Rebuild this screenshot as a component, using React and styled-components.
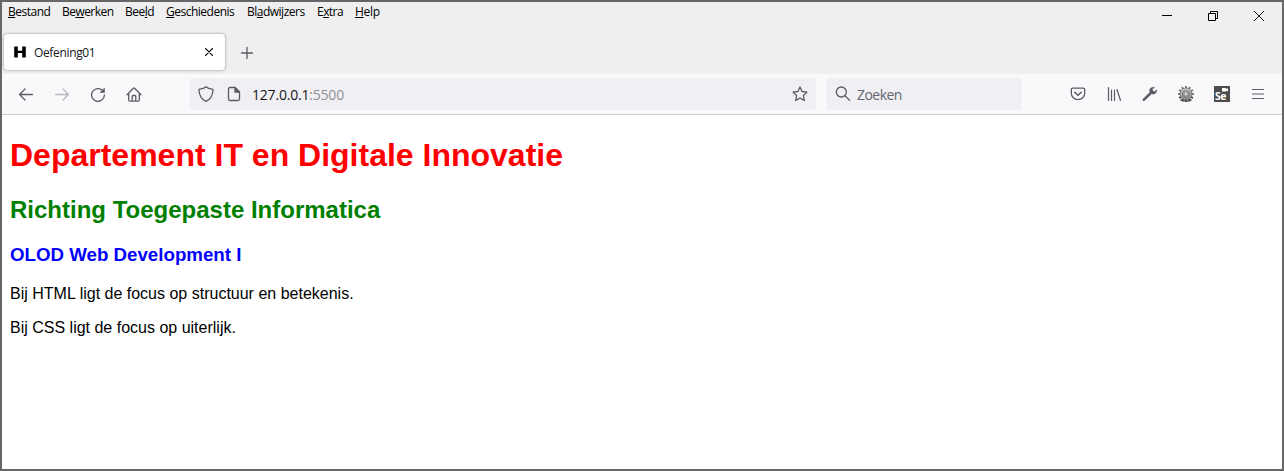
import React from 'react';
import styled, { createGlobalStyle } from 'styled-components';

const GlobalStyle = createGlobalStyle`
  * { box-sizing: border-box; }
  html, body { margin: 0; padding: 0; background: #fff; }
  body { overflow: hidden; }
`;

const Window = styled.div`
  width: 1284px;
  height: 471px;
  border: 2px solid #666;
  background: #fff;
  display: flex;
  flex-direction: column;
  overflow: hidden;
  font-family: 'Open Sans', 'Noto Sans', sans-serif;
`;

const TitleBar = styled.header`
  height: 30px;
  flex: none;
  background: #efefef;
  display: flex;
  justify-content: space-between;
`;

const MenuBar = styled.nav`
  display: flex;
  padding-left: 6px;
  height: 20px;
`;

const MenuItem = styled.span`
  width: ${(p) => p.$width}px;
  font-size: 12px;
  line-height: 20px;
  letter-spacing: ${(p) => p.$spacing}px;
  color: #000;
  white-space: nowrap;
  u { text-underline-offset: 1px; text-decoration-thickness: 1px; }
`;

const WindowControls = styled.div`
  display: flex;
  align-items: center;
  height: 28px;
`;

const Control = styled.div`
  width: 46px;
  display: flex;
  justify-content: center;
`;

const TabStrip = styled.div`
  height: 42px;
  flex: none;
  background: #efefef;
  display: flex;
  align-items: flex-start;
  padding: 2px 0 0 2px;
`;

const Tab = styled.div`
  width: 221px;
  height: 36px;
  border-radius: 4px;
  background: #fff;
  box-shadow: 0 0 3px rgba(60, 60, 75, 0.55);
  display: flex;
  align-items: center;
  padding: 0 8px;
`;

const TabTitle = styled.span`
  flex: 1;
  margin-left: 6px;
  font-size: 12px;
  line-height: 16px;
  letter-spacing: -0.35px;
  padding-top: 1px;
  color: #15141a;
`;

const NewTab = styled.div`
  width: 43px;
  height: 37px;
  display: flex;
  align-items: center;
  justify-content: center;
`;

const Toolbar = styled.div`
  height: 41px;
  flex: none;
  background: #f9f9fb;
  border-bottom: 1px solid #ccc;
  display: flex;
  align-items: center;
  color: #5b5b66;
`;

const ButtonGroup = styled.div`
  display: flex;
  gap: 20px;
  padding-left: 16px;
  width: 188px;
`;

const Extensions = styled.div`
  display: flex;
  gap: 20px;
  margin-left: auto;
  padding-right: 16px;
`;

const Field = styled.div`
  width: ${(p) => p.$width}px;
  height: 32px;
  border-radius: 4px;
  background: #f0f0f4;
  display: flex;
  align-items: center;
  padding: 0 8px;
`;

const AddressField = styled(Field)`
  gap: 12px;
  margin-right: 10px;
`;

const SearchField = styled(Field)`
  gap: 6px;
  padding-left: 9px;
`;

const Address = styled.span`
  flex: 1;
  margin-left: -2px;
  font-size: 14px;
  line-height: 20px;
  letter-spacing: -0.2px;
  padding-top: 2px;
  color: #15141a;
  span { color: #8f8f96; }
`;

const Placeholder = styled.span`
  font-size: 14px;
  line-height: 20px;
  letter-spacing: -0.55px;
  padding-top: 2px;
  color: #66656f;
`;

const Glyph = styled.svg`
  display: block;
  flex: none;
  opacity: ${(p) => (p.$dim ? 0.4 : 1)};
`;

const Page = styled.main`
  flex: 1;
  padding: 0 8px;
  display: flow-root;
  font-family: Arial, 'Liberation Sans', sans-serif;
  font-size: 16px;
  color: #000;
`;

const Department = styled.h1`
  margin: 21px 0 22px;
  font-size: 32px;
  line-height: 38px;
  color: red;
`;

const Course = styled.h2`
  margin: 22px 0 21px;
  font-size: 24px;
  line-height: 27px;
  color: green;
`;

const Module = styled.h3`
  margin: 0 0 19px;
  font-size: 18.72px;
  line-height: 22px;
  color: blue;
`;

const Paragraph = styled.p`
  margin: 0 0 16px;
  line-height: 18px;
`;

function Icon({ children, size = 16, dim, ...rest }) {
  return (
    <Glyph width={size} height={size} viewBox={`0 0 ${size} ${size}`} fill="none" stroke="#5b5b66"
      strokeWidth="1.3" strokeLinecap="round" strokeLinejoin="round" $dim={dim} {...rest}>
      {children}
    </Glyph>
  );
}

const menu = [
  ['', 'B', 'estand', 54, -0.5],
  ['Be', 'w', 'erken', 63, -0.55],
  ['Bee', 'l', 'd', 41, -0.5],
  ['', 'G', 'eschiedenis', 81, -0.5],
  ['Bl', 'a', 'dwijzers', 70, -0.5],
  ['E', 'x', 'tra', 38, -0.55],
  ['', 'H', 'elp', 40, -0.3],
];

const teeth = Array.from({ length: 12 }, (_, i) => i * 30);

export default function App() {
  return (
    <>
      <GlobalStyle />
      <Window>
        <TitleBar>
          <MenuBar>
            {menu.map(([before, key, after, width, spacing]) => (
              <MenuItem key={before + key} $width={width} $spacing={spacing}>
                {before}<u>{key}</u>{after}
              </MenuItem>
            ))}
          </MenuBar>
          <WindowControls>
            <Control>
              <Icon size={12} stroke="#000" strokeWidth="1" strokeLinecap="butt"><path d="M1 5.5h10" /></Icon>
            </Control>
            <Control>
              <Icon size={12} stroke="#000" strokeWidth="1" strokeLinejoin="miter" strokeLinecap="butt">
                <path d="M1.5 3.5h7v7h-7zM3.5 3.5v-2h7v7h-2" />
              </Icon>
            </Control>
            <Control>
              <Icon size={12} stroke="#000" strokeWidth="0.9" strokeLinecap="butt"><path d="M1 1l10 10M11 1L1 11" /></Icon>
            </Control>
          </WindowControls>
        </TitleBar>

        <TabStrip>
          <Tab>
            <Icon stroke="none">
              <path fill="#000" d="M2.200 2.500h3.600v4.200h4.400V2.500h3.600v11h-3.600V9H5.800v4.500H2.200z" />
            </Icon>
            <TabTitle>Oefening01</TabTitle>
            <Icon stroke="#15141a" strokeWidth="1.100"><path d="M4.500 4.500l7 7M11.500 4.500l-7 7" /></Icon>
          </Tab>
          <NewTab>
            <Icon strokeWidth="1.300"><path d="M8 2.500v11M2.500 8h11" /></Icon>
          </NewTab>
        </TabStrip>

        <Toolbar>
          <ButtonGroup>
            <Icon><path d="M14.500 8.500h-13M7 3L1.500 8.500 7 14" /></Icon>
            <Icon dim><path d="M1.500 8.500h13M9 3l5.500 5.500L9 14" /></Icon>
            <Icon>
              <path d="M12.800 4.700A6.400 6.400 0 1 0 14.400 9" />
              <path d="M14.500 2.300v4.200H10.300z" fill="#5b5b66" strokeWidth="0.600" />
            </Icon>
            <Icon>
              <path d="M1 8.700L7.400 2.300q.6-.6 1.200 0L15 8.700M2.700 7.500v6.300q0 1.300 1.300 1.300h8q1.300 0 1.300-1.300V7.500M6.200 15.100v-4.600q0-1 1-1h1.600q1 0 1 1v4.600" />
            </Icon>
          </ButtonGroup>

          <AddressField $width={626}>
            <Icon>
              <path d="M8 .8C6.500 2.200 4 3 1.700 3.200 1 3.300.9 3.800 1 4.500c.4 5 2.500 9 7 10.800 4.500-1.800 6.600-5.800 7-10.800.1-.7 0-1.200-.7-1.300C12 3 9.500 2.200 8 .8z" />
            </Icon>
            <Icon>
              <path d="M9 1.500H4q-1.500 0-1.500 1.500v10q0 1.500 1.500 1.500h8q1.500 0 1.500-1.500V6z" />
              <path d="M9 1.500V6h4.500z" fill="#5b5b66" />
            </Icon>
            <Address>127.0.0.1<span>:5500</span></Address>
            <Icon>
              <path d="M8 1l2.100 4.500 4.900.6-3.600 3.400.9 5L8 12.100l-4.300 2.400.9-5L1 6.100l4.900-.6z" />
            </Icon>
          </AddressField>

          <SearchField $width={196}>
            <Icon><circle cx="6.300" cy="6" r="5" /><path d="M10 9.700l4.700 4.700" /></Icon>
            <Placeholder>Zoeken</Placeholder>
          </SearchField>

          <Extensions>
            <Icon>
              <path d="M2.800 2.200h10.400q1.500 0 1.500 1.500v3.600a6.700 6.300 0 0 1-13.400 0V3.700q0-1.500 1.500-1.500z" />
              <path d="M4.700 6.200L8 9.200l3.300-3" strokeWidth="1.500" />
            </Icon>
            <Icon strokeWidth="1.200"><path d="M2.500 1.500v13M5.500 4v10.500M8.500 4v10.500M11 3.500l3.500 11" /></Icon>
            <Icon stroke="none">
              <path fill="#5b5b66" d="M14.800 3.200l-2.500 2.500-2-2L12.800 1.200C10.800.6 8.500 1.500 7.700 3.200c-.5 1-.4 2 0 3L1.100 12.800c-.6.6-.6 1.400-.1 1.900s1.300.5 1.900-.1l6.700-6.500c2.400 1.100 5.900-.8 5.200-4.900z" />
            </Icon>
            <Icon stroke="none">
              <defs>
                <linearGradient id="metal" x1="0" y1="0" x2="0" y2="1">
                  <stop stopColor="#d0d0d0" /><stop offset="1" stopColor="#858585" />
                </linearGradient>
              </defs>
              <ellipse cx="8" cy="14" rx="6" ry="1.800" fill="#777" />
              {teeth.map((angle) => (
                <rect key={angle} x="7" y="0" width="2" height="3" rx=".5" fill={angle > 90 && angle < 270 ? '#444' : '#777'} transform={`rotate(${angle} 8 8)`} />
              ))}
              <circle cx="8" cy="8" r="6" fill="url(#metal)" stroke="#6d6d6d" strokeWidth=".7" />
              <circle cx="8" cy="8" r="3.500" stroke="#777" strokeWidth="1" />
              <circle cx="8" cy="8" r="1.800" fill="#e5e5e5" stroke="#8a8a8a" strokeWidth=".8" />
            </Icon>
            <Icon stroke="none">
              <path fill="#4d4d4d" d="M0 0h16v16H0z" />
              <path fill="#fff" d="M8 2h4v1l2-1v3.500l-2-.8v.8H8z" />
              <text x="1" y="14.200" fill="#fff" fontFamily="Open Sans, sans-serif" fontWeight="700" fontSize="10.500" textLength="11.500">Se</text>
            </Icon>
            <Icon strokeWidth="1.200"><path d="M2.500 3.500h11M2.500 8h11M2.500 12.500h11" /></Icon>
          </Extensions>
        </Toolbar>

        <Page>
          <Department>Departement IT en Digitale Innovatie</Department>
          <Course>Richting Toegepaste Informatica</Course>
          <Module>OLOD Web Development I</Module>
          <Paragraph>Bij HTML ligt de focus op structuur en betekenis.</Paragraph>
          <Paragraph>Bij CSS ligt de focus op uiterlijk.</Paragraph>
        </Page>
      </Window>
    </>
  );
}
